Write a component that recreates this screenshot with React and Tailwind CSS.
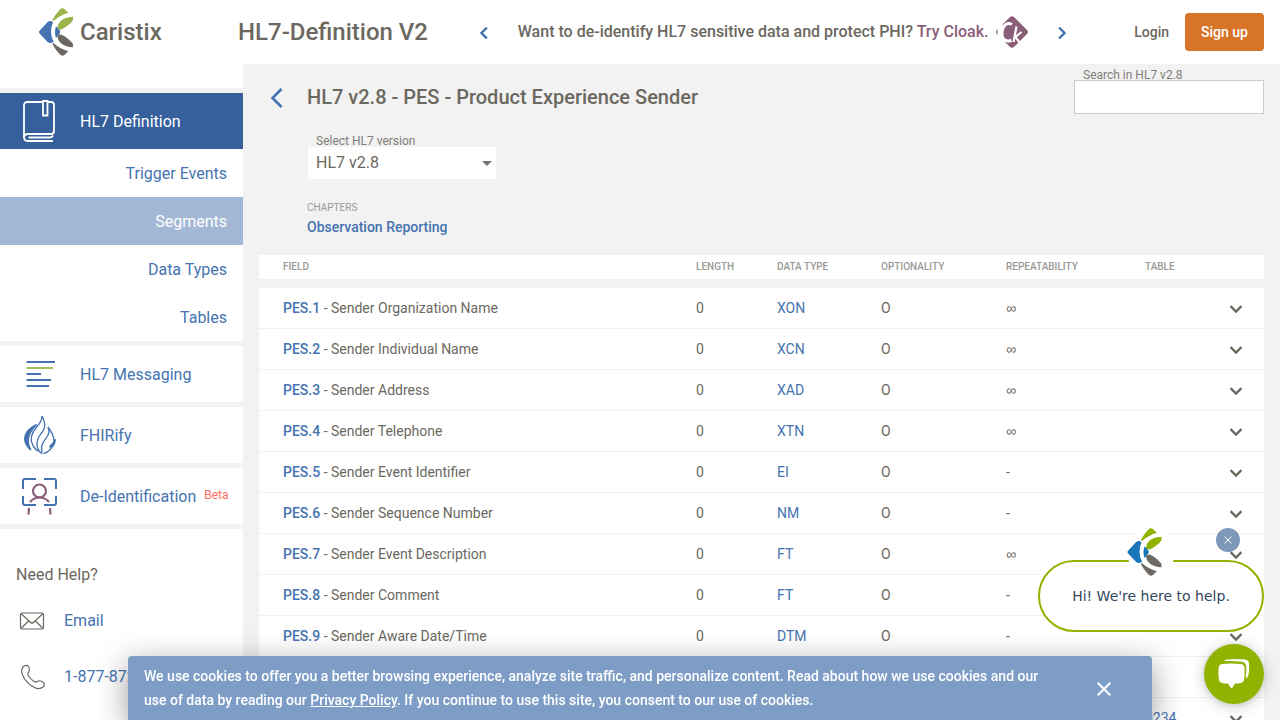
import React from "react";

const rows = [
  ["PES.1", "Sender Organization Name", "XON", "∞", ""],
  ["PES.2", "Sender Individual Name", "XCN", "∞", ""],
  ["PES.3", "Sender Address", "XAD", "∞", ""],
  ["PES.4", "Sender Telephone", "XTN", "∞", ""],
  ["PES.5", "Sender Event Identifier", "EI", "-", ""],
  ["PES.6", "Sender Sequence Number", "NM", "-", ""],
  ["PES.7", "Sender Event Description", "FT", "∞", ""],
  ["PES.8", "Sender Comment", "FT", "-", ""],
  ["PES.9", "Sender Aware Date/Time", "DTM", "-", ""],
  ["PES.10", "Event Report Date", "DTM", "-", ""],
  ["PES.11", "Event Report Timing/Type", "ID", "-", "0234"],
];

function Logo({ green, blue, gray, className }) {
  return (
    <svg viewBox="0 0 102 144" className={className} aria-hidden="true">
      <path fill={green} d="M40 36Q48 20 62 5Q70-3 77 4L88 14Q62 22 43 39Z" />
      <path fill={green} d="M55 60Q56 47 65 39Q78 27 102 26L102 36Q98 44 88 51Q76 61 68 64Q60 66 55 60Z" />
      <path fill={blue} d="M1 69L26 42Q34 36 42 43Q36 57 36 72Q36 88 44 101Q34 108 26 102L1 76Q-1 72 1 69Z" />
      <path fill={blue} d="M51 55L62 67Q66 72 62 77L51 90Q45 72 51 55Z" />
      <path fill={gray} d="M55 84Q60 78 68 80Q76 83 88 93Q98 102 102 108L102 118Q78 117 65 105Q56 97 55 84Z" />
      <path fill={gray} d="M43 105Q62 122 88 130L77 140Q70 147 62 139Q48 124 40 108Z" />
    </svg>
  );
}

function Chevron({ d, className }) {
  return (
    <svg viewBox="0 0 24 24" className={className} fill="currentColor" stroke="currentColor" strokeWidth="0.5" aria-hidden="true">
      <path d={d} />
    </svg>
  );
}
const LEFT = "M15.41 7.41 14 6l-6 6 6 6 1.41-1.41L10.83 12z";
const RIGHT = "M8.59 16.59 10 18l6-6-6-6-1.41 1.41L13.17 12z";
const DOWN = "M7.41 8.59 12 13.17l4.59-4.58L18 10l-6 6-6-6z";

function BookIcon() {
  return (
    <svg viewBox="0 0 34 42" className="h-[42px] w-[34px]" fill="none" stroke="#fff" strokeWidth="1.8" aria-hidden="true">
      <path d="M19 2H4.500Q1 2 1 5.500V37Q1 41 5 41H30" />
      <path d="M25 2H28Q31 2 31 5V31Q31 34 28 34H5Q1 34 1 37.500" />
      <path d="M20 1H24.500V15.500H20Z" />
      <path d="M5.500 37.500H27Q29 37.500 30 35.500" />
    </svg>
  );
}

function MessageIcon() {
  return (
    <svg viewBox="0 0 32 32" className="size-8" fill="none" stroke="#4573b1" strokeWidth="1.8" aria-hidden="true">
      <path d="M2.500 4H31M2.500 16H17M2.500 22H27M2.500 28H25" />
      <path stroke="#99b54a" d="M2.500 10H29" />
    </svg>
  );
}

function FlameIcon() {
  return (
    <svg viewBox="0 0 96 118" className="h-10 w-8" fill="none" stroke="#4573b1" strokeWidth="4" strokeLinejoin="round" aria-hidden="true">
      <path d="M54 2Q54 18 38 35C22 54 17 72 26 88Q29 96 42 108" />
      <path d="M54 2Q66 24 60 41C53 58 37 62 39 90Q41 106 54 115" />
      <path d="M72 35Q79 52 68 66C53 84 50 94 54 111" />
      <path d="M72 35Q90 58 90 79Q84 108 58 115" />
      <path fill="#4573b1" d="M37 28C9 41-8 66 9 91Q14 100 20 103C6 78 11 54 37 28Z" />
      <path fill="#4573b1" d="M94 73Q88 84 78 92Q76 98 86 94Q93 86 94 73Z" />
    </svg>
  );
}

function FaceIcon() {
  return (
    <svg viewBox="0 0 36 38" className="h-[38px] w-9" fill="none" stroke="#4573b1" strokeWidth="2" aria-hidden="true">
      <path d="M14 2H3Q1 2 1 4V12M22 2H32Q34 2 34 4V12M1 19V26Q1 28 3 28H14M34 19V26Q34 28 32 28H22" />
      <g stroke="#8a5d78" strokeWidth="2.200">
        <circle cx="17.500" cy="14" r="6.500" />
        <path d="M8 25Q12 20.500 17.500 20.500T27 25" />
        <path d="M7 31L6.500 37.500M28 31L28.500 37.500" />
      </g>
    </svg>
  );
}

function MailIcon() {
  return (
    <svg viewBox="0 0 26 18" className="h-[18px] w-[26px]" fill="none" stroke="#6b6860" strokeWidth="1.2" aria-hidden="true">
      <rect x="1.500" y="1" width="23" height="16" rx="1.500" />
      <path d="M2 1.500L11 10Q13 12 15 10L24 1.500M2 16.500L9.500 9M24 16.500L16.500 9" />
    </svg>
  );
}

function PhoneIcon() {
  return (
    <svg viewBox="0 0 26 26" className="size-[26px]" fill="none" stroke="#6b6860" strokeWidth="1.2" strokeLinejoin="round" aria-hidden="true">
      <path d="M3 3Q6 0 8.500 2.500Q10 5 9 7.500C8 9 7 9.500 8.500 12Q11 15.500 14 17.500C16.500 19 17 17.500 18.500 17Q21 16.500 23.500 18.500Q25.500 21 23 23Q19.500 26 14.500 23.500Q9 21 5 15.500Q-.5 7 3 3Z" />
    </svg>
  );
}

function NavItem({ icon, children, active }) {
  return (
    <a
      href="#"
      className={
        "flex h-14 items-center " + (active ? "bg-[#35609c] text-white" : "bg-white text-[#4573b1]")
      }
    >
      <span className="flex w-20 shrink-0 justify-center">{icon}</span>
      <span className="flex pt-0.5">{children}</span>
    </a>
  );
}

function Sidebar() {
  const subs = ["Trigger Events", "Segments", "Data Types", "Tables"];
  return (
    <aside className="flex w-[243px] shrink-0 flex-col gap-[5px] overflow-hidden text-base">
      <div className="h-6 shrink-0 bg-white" />
      <nav className="flex flex-col gap-[5px]">
        <div>
          <NavItem active icon={<BookIcon />}>HL7 Definition</NavItem>
          {subs.map((s) => (
            <a
              key={s}
              href="#"
              className={
                "flex h-12 items-center justify-end pt-0.5 pr-4 " +
                (s === "Segments" ? "bg-[#a2b8d5] text-white" : "bg-white text-[#4573b1]")
              }
            >
              {s}
            </a>
          ))}
        </div>
        <NavItem icon={<MessageIcon />}>HL7 Messaging</NavItem>
        <NavItem icon={<FlameIcon />}>FHIRify</NavItem>
        <NavItem icon={<FaceIcon />}>
          De-Identification
          <span className="ml-2 text-xs leading-5 text-[#ff6b61]">Beta</span>
        </NavItem>
      </nav>
      <div className="flex-1 bg-white px-4 pt-[34px]">
        <p>Need Help?</p>
        <a href="#" className="mt-1.5 flex h-14 items-center gap-[19px] pl-[3px] text-[#4573b1]">
          <MailIcon />
          Email
        </a>
        <a href="#" className="flex h-14 items-center gap-[18px] pl-1 text-[#4573b1]">
          <PhoneIcon />
          1-877-872-0027
        </a>
      </div>
    </aside>
  );
}

function Header() {
  return (
    <header className="flex h-16 shrink-0 items-center bg-white pr-4 pl-[39px] font-medium">
      <a href="#" className="flex w-[199px] items-center gap-[7px] text-2xl">
        <Logo green="#99b54a" blue="#4573b1" gray="#6b6860" className="h-12 w-[34px]" />
        Caristix
      </a>
      <h1 className="text-2xl">HL7-Definition V2</h1>
      <div className="flex flex-1 items-center justify-center gap-[22px]">
        <button aria-label="Previous" className="pt-0.5 text-[#4573b1]">
          <Chevron d={LEFT} className="size-6" />
        </button>
        <p className="flex items-center gap-2 whitespace-nowrap">
          <span>
            Want to de-identify HL7 sensitive data and protect PHI?{" "}
            <a href="#" className="text-[#8a5d78]">Try Cloak.</a>
          </span>
          <svg viewBox="0 0 32 32" className="size-8" aria-hidden="true">
            <path fill="#8a5d78" d="M13.500 1.500Q16-1 18.500 1.500L31 14Q33 16 31 18L18.500 30.500Q16 33 13.500 30.500L1 18Q-1 16 1 14Z" />
            <path fill="#fff" d="M2 8L7 8.500Q4.500 16 8 25L2 25Q1 16 2 8Z" />
            <path fill="none" stroke="#fff" strokeWidth="3" d="M16 8.500Q10 5.500 7 12Q4.500 20 8 23.500Q11 26 15.500 24.500" />
            <path fill="none" stroke="#fff" strokeWidth="2.200" d="M20.500 10.500L17.500 26M25.500 16L19.500 21L23.500 26.500" />
          </svg>
        </p>
        <button aria-label="Next" className="pt-0.5 text-[#4573b1]">
          <Chevron d={RIGHT} className="size-6" />
        </button>
      </div>
      <a href="#" className="px-4 text-sm">Login</a>
      <button className="h-[38px] rounded bg-[#d87427] px-4 text-sm font-medium text-white">Sign up</button>
    </header>
  );
}

function FieldTable() {
  return (
    <table className="w-full table-fixed border-separate border-spacing-0 text-left text-sm">
      <colgroup>
        <col />
        <col className="w-[81px]" />
        <col className="w-[104px]" />
        <col className="w-[125px]" />
        <col className="w-[139px]" />
        <col className="w-[63px]" />
        <col className="w-14" />
      </colgroup>
      <thead className="text-[10px] text-[#9b9994]">
        <tr className="h-[33px]">
          {["FIELD", "LENGTH", "DATA TYPE", "OPTIONALITY", "REPEATABILITY", "TABLE", ""].map((h, i) => (
            <th
              key={i}
              className="border-b-[9px] border-[#f2f2f2] bg-white bg-clip-padding p-0 font-medium first:pl-6"
            >
              {h}
            </th>
          ))}
        </tr>
      </thead>
      <tbody className="[&_td]:border-b [&_td]:border-[#f2f2f2] [&_td]:bg-white [&_td]:p-0">
        {rows.map(([id, name, type, rep, table]) => (
          <tr key={id} className="h-[41px]">
            <td>
              <span className="pl-6">
                <a href="#" className="font-medium text-[#4573b1]">{id}</a> - {name}
              </span>
            </td>
            <td>0</td>
            <td><a href="#" className="text-[#4573b1]">{type}</a></td>
            <td>O</td>
            <td className={rep === "∞" ? "font-['Liberation_Sans',sans-serif]" : ""}>{rep}</td>
            <td><a href="#" className="text-[#4573b1]">{table}</a></td>
            <td>
              <button aria-label={"Expand " + id} className="ml-4 block pt-0.5">
                <Chevron d={DOWN} className="size-6" />
              </button>
            </td>
          </tr>
        ))}
      </tbody>
    </table>
  );
}

function Main() {
  return (
    <main className="min-w-0 flex-1 overflow-hidden px-4">
      <div className="flex h-[66px] items-center">
        <button aria-label="Back" className="w-12 pt-0.5 pl-2 text-[#4573b1]">
          <svg viewBox="0 0 20 20" className="size-5" fill="none" stroke="currentColor" strokeWidth="2.600" aria-hidden="true">
            <path d="M14.500 1L5.500 10L14.500 19" />
          </svg>
        </button>
        <h2 className="flex-1 text-xl font-medium">HL7 v2.8 - PES - Product Experience Sender</h2>
        <div className="flex w-[190px] flex-col self-start pt-1.5">
          <label htmlFor="search" className="pl-[9px] text-xs leading-[10px] text-[#807e78]">Search in HL7 v2.8</label>
          <input id="search" className="h-[34px] border border-[#ccc] bg-white px-2" />
        </div>
      </div>
      <div className="flex flex-col items-start pt-1.5 pl-12">
        <label htmlFor="version" className="pl-[9px] text-xs leading-[11px] text-[#807e78]">Select HL7 version</label>
        <div className="relative ml-px">
          <select id="version" className="h-8 w-[188px] appearance-none bg-white px-2 text-base">
            <option>HL7 v2.8</option>
          </select>
          <svg viewBox="0 0 10 5" className="pointer-events-none absolute top-3.5 right-1 h-[5px] w-2.5" aria-hidden="true">
            <path fill="#757575" d="M0 0H10L5 5Z" />
          </svg>
        </div>
        <p className="mt-[22px] text-[10px] leading-[14px] text-[#9b9994]">CHAPTERS</p>
        <a href="#" className="mt-0.5 mb-[18px] text-sm font-medium text-[#4573b1]">Observation Reporting</a>
      </div>
      <FieldTable />
    </main>
  );
}

function CookieBar() {
  return (
    <div className="fixed inset-x-32 bottom-0 flex h-16 items-center justify-between rounded-t bg-[#7d9dc7] pr-9 pl-4 text-sm leading-6 font-medium text-white shadow-[0_8px_32px_rgba(0,0,0,0.4)]">
      <p className="max-w-[920px]">
        We use cookies to offer you a better browsing experience, analyze site traffic, and personalize content. Read about how we use cookies and our{" "}
        <br />
        use of data by reading our <a href="#" className="underline">Privacy Policy</a>. If you continue to use this site, you consent to our use of cookies.
      </p>
      <button aria-label="Close cookie notice" className="pt-0.5">
        <svg viewBox="0 0 24 24" className="size-6" stroke="#fff" strokeWidth="2" aria-hidden="true">
          <path d="M5.700 5.700L18.300 18.300M18.300 5.700L5.700 18.300" />
        </svg>
      </button>
    </div>
  );
}

function Chat() {
  return (
    <div className="fixed right-4 bottom-4 flex flex-col items-end">
      <div className="relative mb-3 flex h-[72px] w-[226px] items-center justify-center rounded-full border-2 border-[#8fb300] bg-white">
        <p className="font-['DejaVu_Sans',sans-serif] text-sm text-[#33475b]">Hi! We're here to help.</p>
        <div className="absolute -top-[34px] left-[87px] size-12 rounded-full bg-white">
          <Logo green="#8fb300" blue="#1876b8" gray="#6f6963" className="h-12 w-[35px]" />
        </div>
        <button
          aria-label="Dismiss greeting"
          className="absolute -top-[34px] right-[22px] flex size-6 items-center justify-center rounded-full bg-[#7d98b8]"
        >
          <svg viewBox="0 0 8 8" className="size-2" stroke="#fff" aria-hidden="true">
            <path d="M0.500 0.500L7.500 7.500M7.500 0.500L0.500 7.500" />
          </svg>
        </button>
      </div>
      <button
        aria-label="Open chat"
        className="flex size-[60px] items-center justify-center rounded-full bg-[#8fb300] shadow-[0_1px_6px_rgba(0,0,0,0.1),0_2px_16px_rgba(0,0,0,0.2)]"
      >
        <svg viewBox="0 0 32 30" className="h-[30px] w-8" aria-hidden="true">
          <path fill="#fff" d="M6 2Q7 .6 9 .5Q18-.3 27 .5Q30.500 1 31 4Q31.300 11 30.500 16Q30 18.700 27.700 19.500Q28.800 11 28 6.500Q27.500 3.500 24.500 2.800Q15 1.800 6 2Z" />
          <path fill="#fff" d="M4 5Q13.500 3.800 23 5Q26 5.500 26.500 8.500Q27 15 26 21Q25.500 23.500 23 24Q20 24.500 17 24.500L14.300 28.800Q13.500 29.800 12.700 28.800L10 24.500Q7 24.500 4 24Q1.500 23.500 1 21Q0 15 .6 8.500Q1 5.500 4 5Z" />
        </svg>
      </button>
    </div>
  );
}

export default function App() {
  return (
    <div className="flex h-screen flex-col overflow-hidden bg-[#f2f2f2] font-[Roboto,sans-serif] text-[#6b6860]">
      <Header />
      <div className="flex min-h-0 flex-1">
        <Sidebar />
        <Main />
      </div>
      <CookieBar />
      <Chat />
    </div>
  );
}
